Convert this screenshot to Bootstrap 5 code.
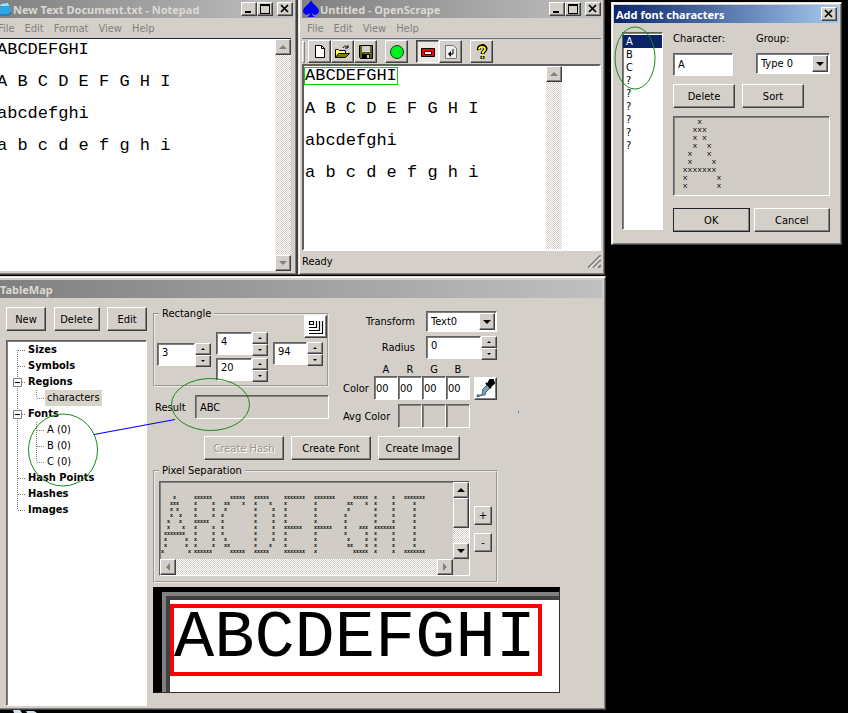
<!DOCTYPE html>
<html lang="en">
<head>
<meta charset="utf-8">
<meta name="viewport" content="width=device-width, initial-scale=1">
<title>OpenScrape</title>
<link href="https://cdn.jsdelivr.net/npm/bootstrap@5.3.0/dist/css/bootstrap.min.css" rel="stylesheet">
<style>
:root{--face:#d5cfc9;--dk:#808080;--ddk:#404040}
body{background:#000;color:#000;font-family:"DejaVu Sans Condensed","DejaVu Sans",sans-serif;font-size:11px;line-height:13px}
.desktop{min-height:100vh}
.win{position:absolute;background:var(--face);border:1px solid;border-color:#e6e2dc #404040 #404040 #e6e2dc;box-shadow:inset 1px 1px #fff,inset -1px -1px #808080;padding:3px}
.win-note{left:-7px;top:-4px;width:305px;height:279px;border-right-width:2px}
.win-note .title{padding-left:3px}
.win-note .doc{margin-right:2px}
.win-scrape{left:298px;top:-4px;width:307px;height:279px}
.win-dialog{left:611px;top:2px;width:231px;height:243px;padding:2px}
.win-map{left:-4px;top:276px;width:610px;height:434px}
.title{height:18px;color:#dcd8d2;font-weight:700;background:linear-gradient(90deg,#808080,#c0c0c0)}
.title.on{color:#fff;background:linear-gradient(90deg,#0a246a,#a6caf0);padding:0 2px}
.title h2{font-size:11px;line-height:13px;margin:0;font-weight:700;font-family:"Noto Sans",sans-serif;white-space:nowrap}
button,.raised{background:var(--face);color:#000;border:1px solid;border-color:#fff #404040 #404040 #fff;box-shadow:inset -1px -1px #808080;padding:0;border-radius:0;display:flex;align-items:center;justify-content:center;line-height:13px}
button:disabled{color:#9a958f;text-shadow:1px 1px #fff}
.cap{width:16px;height:14px}
.push{height:24px}
.sunk{background:#fff;border:1px solid;border-color:#606060 #fff #fff #606060;box-shadow:inset 1px 1px #808080;border-radius:0;color:#000}
.flat{background:#d2ccc6}
.menu{height:20px;color:#808080}
.menu a{color:#808080;text-decoration:none;padding:0 5px}
.dither{background:repeating-conic-gradient(#fff 0 25%,#d5cfc9 0 50%) 0 0/2px 2px}
.sb{width:16px;height:16px;flex:none}
.mono{font-family:"Liberation Mono",monospace;font-size:17px;line-height:16px;white-space:pre;overflow:visible;resize:none;color:#000;margin:0}
.note-area{border:0;outline:0;overflow:hidden;padding:3px 0 0 0;background:#fff}
.tools{height:26px}
.tool{width:23px;height:23px}
.pressed{background:#eae7e3;border-color:#404040 #fff #fff #404040;box-shadow:inset 1px 1px #808080}
.grip{width:3px;height:22px;border:1px solid;border-color:#fff #808080 #808080 #fff;margin-right:3px}
.canvas-area{height:187px;background:#fff;border:2px solid;border-color:#606060 #fff #fff #606060}
.shot{width:242px}
.pick{border:1px solid #00d800;height:18px;width:94px;margin:1px 0 0 0}
.lines{margin:16px 0 0 1px}
.status{height:21px}
.list{width:41px;height:198px;padding:2px 0 0}
.list li{line-height:13px;padding-left:3px}
.list .sel{background:#0a246a;color:#fff}
input.sunk{font-size:11px;line-height:13px;padding:0 4px;min-width:0;outline:0}
.combo{position:relative;height:21px}
.combo select{appearance:none;width:100%;height:100%;padding:0 4px;font-size:11px;outline:0}
.combo .raised{position:absolute;right:2px;top:2px;bottom:2px;width:16px;pointer-events:none}
.dlg{padding:9px 9px 0 8px;gap:10px}
.dlg-form{display:grid;grid-template-columns:62px 62px 1fr;column-gap:7px}
.glyph{font-family:"Liberation Mono",monospace;font-size:8px;line-height:8px;margin:0;overflow:hidden}
.glyph-one{height:80px;padding:1px 0 0 4px}
.glyph-all{font-size:5px;line-height:6px;font-weight:700;padding:13px 0 0 1px}
fieldset{border:2px groove #eeeae5;padding:0;margin:0;min-width:0}
legend{float:none;width:auto;font-size:11px;line-height:13px;margin:0 0 0 4px;padding:0 3px}
.map-body{padding:9px 0 0 6px;gap:6px}
.map-left{width:141px}
.map-right{width:407px}
.tree{height:366px;margin-top:9px;padding:1px 0 0 6px}
.tree ul{list-style:none;margin:0;padding:0}
.tree li{line-height:16px}
.tree .node{height:16px;display:flex;align-items:center;font-weight:700}
.tree .node svg{flex:none}
.tree .leaf{font-weight:400}
.hot{background:#d8d3c9;padding:0 2px;margin-left:-2px}
.rect{height:80px;width:176px}
.rect-grid{display:grid;grid-template-columns:54px 52px 54px;column-gap:5px;padding-left:2px;margin-top:-5px}
.drop-1{padding-top:28px}
.drop-2{padding-top:17px;gap:3px}
.spin{height:23px}
.spin input{flex:1;width:0;padding-bottom:4px!important}
.spin button{width:16px;height:12px}
.opts{display:grid;grid-template-columns:1fr 71px;column-gap:11px;align-items:center}
.argb{display:grid;grid-template-columns:minmax(0,1fr) 24px 24px 24px 24px 27px;align-items:center}
.argb label{padding-left:14px;white-space:nowrap;text-align:left}
.argb .wide{grid-column:span 2}
.argb input{width:24px;height:24px;padding:0 1px}
.makers{padding-left:51px;gap:7px}
.sep{height:119px;width:345px}
.sepbox{width:311px;height:95px}
.zoomed{height:106px;border:1px solid #303030;border-top:5px solid #000;border-left:9px solid #000;background:#fff}
.zoomed .edge1{border-top:4px solid #808080;border-left:4px solid #808080;height:100%}
.zoomed .edge2{border-top:4px solid #404040;border-left:4px solid #404040;height:100%;padding-top:4px}
.zoomed .red{border:4px solid #f00;width:372px;height:72px;font-family:"Liberation Mono",monospace;font-size:67px;line-height:60px;white-space:nowrap}
.marks{position:absolute;left:0;top:0;pointer-events:none}
</style>
<script src="https://cdn.jsdelivr.net/npm/bootstrap@5.3.0/dist/js/bootstrap.bundle.min.js"></script>
</head>
<body>
<svg width="0" height="0" class="position-absolute" aria-hidden="true"><defs>
<symbol id="min" viewBox="0 0 12 10"><path d="M2 7h6v2H2z"/></symbol>
<symbol id="max" viewBox="0 0 12 10"><path d="M1 0h10v10H1zM2 2v7h8V2z" fill-rule="evenodd"/></symbol>
<symbol id="cls" viewBox="0 0 12 10"><path d="M2 1l7 7M9 1L2 8" stroke="#000" stroke-width="1.7" fill="none"/></symbol>
<symbol id="up" viewBox="0 0 8 4"><path d="M4 0L8 4H0z"/></symbol>
<symbol id="dn" viewBox="0 0 8 4"><path d="M0 0h8L4 4z"/></symbol>
<symbol id="lf" viewBox="0 0 4 8"><path d="M4 0v8L0 4z"/></symbol>
<symbol id="rt" viewBox="0 0 4 8"><path d="M0 0l4 4-4 4z"/></symbol>
<symbol id="br" viewBox="0 0 22 16"><path d="M4.500 0V16M5 8.500H13" stroke="#808080" stroke-dasharray="1 1" fill="none"/></symbol>
<symbol id="br0" viewBox="0 0 22 16"><path d="M4.500 8V16M5 8.500H13" stroke="#808080" stroke-dasharray="1 1" fill="none"/></symbol>
<symbol id="br9" viewBox="0 0 22 16"><path d="M4.500 0V8M5 8.500H13" stroke="#808080" stroke-dasharray="1 1" fill="none"/></symbol>
<symbol id="bx" viewBox="0 0 22 16"><path d="M4.500 0V16M5 8.500H13" stroke="#808080" stroke-dasharray="1 1" fill="none"/><path d="M.5 4.500h8v8h-8z" fill="#fff" stroke="#808080"/><path d="M2 8.500h5" stroke="#000"/></symbol>
<symbol id="ch" viewBox="0 0 41 16"><path d="M4.500 0V16M23.500 0V16M24 8.500H32" stroke="#808080" stroke-dasharray="1 1" fill="none"/></symbol>
<symbol id="ch1" viewBox="0 0 41 16"><path d="M4.500 0V16M23.500 0V8M24 8.500H32" stroke="#808080" stroke-dasharray="1 1" fill="none"/></symbol>
</defs></svg>
<main class="desktop position-relative overflow-hidden">

<section class="win win-note d-flex flex-column">
  <header class="title d-flex align-items-center">
    <svg width="13" height="16" viewBox="0 0 13 16"><path d="M1 3l7-1 3 9-2 3H0z" fill="#29a8e8"/><path d="M1 3l7-1 1 3H0z" fill="#a8e0f8"/><path d="M0 14h9l2-3" stroke="#1060a0" fill="none"/></svg>
    <h2 class="flex-grow-1">New Text Document.txt - Notepad</h2>
    <button class="cap" aria-label="Minimize"><svg width="12" height="10"><use href="#min"/></svg></button><button class="cap" aria-label="Maximize"><svg width="12" height="10"><use href="#max"/></svg></button><button class="cap ms-1" aria-label="Close"><svg width="12" height="10"><use href="#cls"/></svg></button>
  </header>
  <nav class="menu d-flex align-items-center" style="margin-left:-4px"><a href="#">File</a><a href="#">Edit</a><a href="#">Format</a><a href="#">View</a><a href="#">Help</a></nav>
  <div class="doc d-flex flex-grow-1 border-top border-dark">
    <textarea class="mono note-area flex-grow-1" aria-label="Document" spellcheck="false">ABCDEFGHI

A B C D E F G H I

abcdefghi

a b c d e f g h i</textarea>
    <div class="dither d-flex flex-column justify-content-between">
      <button class="sb" aria-label="Scroll up"><svg width="8" height="4" fill="#808080"><use href="#up"/></svg></button>
      <button class="sb" aria-label="Scroll down"><svg width="8" height="4" fill="#808080"><use href="#dn"/></svg></button>
    </div>
  </div>
</section>

<section class="win win-scrape">
  <header class="title d-flex align-items-center">
    <svg width="18" height="18" viewBox="0 0 18 18"><path d="M9 0C10 4 17 7 17 11c0 4-5 5-7 2 0 2 1 3 3 4H5c2-1 3-2 3-4-2 3-7 2-7-2C1 7 8 4 9 0z" fill="#00f"/></svg>
    <h2 class="flex-grow-1">Untitled - OpenScrape</h2>
    <button class="cap" aria-label="Minimize"><svg width="12" height="10"><use href="#min"/></svg></button><button class="cap" aria-label="Maximize"><svg width="12" height="10"><use href="#max"/></svg></button><button class="cap ms-1" aria-label="Close"><svg width="12" height="10"><use href="#cls"/></svg></button>
  </header>
  <nav class="menu d-flex align-items-center"><a href="#">File</a><a href="#">Edit</a><a href="#">View</a><a href="#">Help</a></nav>
  <div class="tools d-flex align-items-center border-top border-secondary">
    <span class="grip"></span>
    <button class="tool" aria-label="New"><svg width="16" height="16"><path d="M3.500 1.500h6l3 3v9h-9z" fill="#fff" stroke="#000"/><path d="M9.500 1.500v3h3" fill="none" stroke="#000"/></svg></button>
    <button class="tool" aria-label="Open"><svg width="17" height="16"><path d="M1.500 13.500v-8h3l1 1h6v3" fill="#ffff60" stroke="#000"/><path d="M1.500 13.500l3-4h11l-4 4z" fill="#808000" stroke="#000"/><path d="M9 4c1-3 4-2 5 0m0-3v3h-3" fill="none" stroke="#000"/></svg></button>
    <button class="tool" aria-label="Save"><svg width="16" height="16"><path d="M1.500 1.500h13v13h-12l-1-1z" fill="#606018" stroke="#000"/><path d="M4 2h8v6H4z" fill="#d5cfc9"/><path d="M4 10h8v4H4z"/><path d="M9 11h2v3H9z" fill="#d5cfc9"/></svg></button>
    <button class="tool ms-2" aria-label="Start"><svg width="16" height="16"><circle cx="8" cy="8" r="6.500" fill="#00f020" stroke="#104010"/></svg></button>
    <button class="tool pressed ms-2" aria-label="Select region"><svg width="16" height="16"><path d="M1.500 4.500h13v8h-13z" fill="red" stroke="#000"/><path d="M4.500 7.500h7v3h-7z" fill="#eee" stroke="#400"/></svg></button>
    <button class="tool" aria-label="Refresh"><svg width="16" height="16"><path d="M2.500 1.500h8l3 3v10h-11z" fill="#eee" stroke="#777"/><path d="M10 5v5H7" fill="none" stroke="#000"/><path d="M8 7v6l-3-3z"/></svg></button>
    <button class="tool ms-2" aria-label="Help"><svg width="14" height="16"><path d="M4 6C3 1 11 1 10.500 5 10 7 7.500 7.500 7.500 10M7.500 12v3" fill="none" stroke="#000" stroke-width="4"/><path d="M4 5.500C4 2 10 2 10 5 10 7 7.500 7.500 7.500 9.500M7.500 12.500v2" fill="none" stroke="#ff0" stroke-width="1.800"/></svg></button>
  </div>
  <div class="canvas-area d-flex">
    <div class="shot"><div class="mono pick">ABCDEFGHI</div><pre class="mono lines">A B C D E F G H I

abcdefghi

a b c d e f g h i</pre></div>
    <div class="dither"><button class="sb" aria-label="Scroll up"><svg width="8" height="4" fill="#808080"><use href="#up"/></svg></button></div>
  </div>
  <footer class="status d-flex align-items-center justify-content-between"><span>Ready</span><svg width="13" height="13"><path d="M0 13L13 0M5 13l8-8M10 13l3-3" stroke="#808080" stroke-width="2"/><path d="M1.500 13L13 1.500M6.500 13L13 6.500" stroke="#fff"/></svg></footer>
</section>

<section class="win win-dialog">
  <header class="title on d-flex align-items-center"><h2 class="flex-grow-1">Add font characters</h2><button class="cap" aria-label="Close"><svg width="12" height="10"><use href="#cls"/></svg></button></header>
  <div class="dlg d-flex">
    <ul class="list sunk list-unstyled mb-0"><li class="sel">A</li><li>B</li><li>C</li><li>?</li><li>?</li><li>?</li><li>?</li><li>?</li><li>?</li></ul>
    <div class="flex-grow-1">
      <div class="d-flex justify-content-between mb-2"><div><label for="chr" class="d-block mb-1">Character:</label><input id="chr" class="sunk mt-1" style="width:60px;height:23px" value="A"></div>
      <div style="width:74px"><label for="grp" class="d-block mb-1">Group:</label><div class="combo mt-2"><select id="grp" class="sunk"><option>Type 0</option></select><span class="raised"><svg width="8" height="4"><use href="#dn"/></svg></span></div></div></div>
      <div class="dlg-form mb-2"><button class="push">Delete</button><button class="push">Sort</button></div>
      <pre class="sunk flat glyph glyph-one mb-0">    x
   xxx
   x x
   x  x
  x   x
  x    x
 xxxxxxx
 x      x
 x      x</pre>
      <div class="d-flex mt-2 pt-1 gap-1"><button class="push flex-fill w-50 border-dark">OK</button><button class="push flex-fill w-50">Cancel</button></div>
    </div>
  </div>
</section>

<section class="win win-map">
  <header class="title d-flex align-items-center"><h2>TableMap</h2></header>
  <div class="map-body d-flex">
    <div class="map-left">
      <div class="d-flex justify-content-between"><button class="push" style="width:40px">New</button><button class="push" style="width:46px">Delete</button><button class="push" style="width:40px">Edit</button></div>
      <div class="tree sunk"><ul>
        <li class="node"><svg width="15" height="16" viewBox="0 0 15 16"><use href="#br0" width="22" height="16"/></svg><span>Sizes</span></li>
        <li class="node"><svg width="15" height="16" viewBox="0 0 15 16"><use href="#br" width="22" height="16"/></svg><span>Symbols</span></li>
        <li class="node"><svg width="15" height="16" viewBox="0 0 15 16"><use href="#bx" width="22" height="16"/></svg><span>Regions</span></li>
        <li class="node leaf"><svg width="34" height="16" viewBox="0 0 34 16"><use href="#ch1" width="41" height="16"/></svg><span class="hot">characters</span></li>
        <li class="node"><svg width="15" height="16" viewBox="0 0 15 16"><use href="#bx" width="22" height="16"/></svg><span>Fonts</span></li>
        <li class="node leaf"><svg width="34" height="16" viewBox="0 0 34 16"><use href="#ch" width="41" height="16"/></svg><span>A (0)</span></li>
        <li class="node leaf"><svg width="34" height="16" viewBox="0 0 34 16"><use href="#ch" width="41" height="16"/></svg><span>B (0)</span></li>
        <li class="node leaf"><svg width="34" height="16" viewBox="0 0 34 16"><use href="#ch1" width="41" height="16"/></svg><span>C (0)</span></li>
        <li class="node"><svg width="15" height="16" viewBox="0 0 15 16"><use href="#br" width="22" height="16"/></svg><span>Hash Points</span></li>
        <li class="node"><svg width="15" height="16" viewBox="0 0 15 16"><use href="#br" width="22" height="16"/></svg><span>Hashes</span></li>
        <li class="node"><svg width="15" height="16" viewBox="0 0 15 16"><use href="#br9" width="22" height="16"/></svg><span>Images</span></li>
      </ul></div>
    </div>
    <div class="map-right">
      <div class="d-flex">
        <div style="width:176px">
          <fieldset class="rect"><legend>Rectangle</legend>
            <div class="rect-grid">
              <div class="drop-1"><div class="spin d-flex"><input class="sunk" aria-label="Left" value="3"><div><button aria-label="Up"><svg width="4" height="2"><use href="#up"/></svg></button><button aria-label="Down"><svg width="4" height="2"><use href="#dn"/></svg></button></div></div></div>
              <div class="drop-2 d-flex flex-column"><div class="spin d-flex"><input class="sunk" aria-label="Top" value="4"><div><button aria-label="Up"><svg width="4" height="2"><use href="#up"/></svg></button><button aria-label="Down"><svg width="4" height="2"><use href="#dn"/></svg></button></div></div>
              <div class="spin d-flex"><input class="sunk" aria-label="Bottom" value="20"><div><button aria-label="Up"><svg width="4" height="2"><use href="#up"/></svg></button><button aria-label="Down"><svg width="4" height="2"><use href="#dn"/></svg></button></div></div></div>
              <div><button class="ms-auto tool bg-white mb-1" aria-label="Drag region"><svg width="16" height="16" fill="none" stroke="#000"><path d="M1.500 2.500h4v3h-4zM8.500 2v6.500H1M11.500 2v9.500H1M14.500 2v12.500H1" stroke-width="1.200"/></svg></button><div class="spin d-flex me-1"><input class="sunk" aria-label="Right" value="94"><div><button aria-label="Up"><svg width="4" height="2"><use href="#up"/></svg></button><button aria-label="Down"><svg width="4" height="2"><use href="#dn"/></svg></button></div></div></div>
            </div>
          </fieldset>
          <div class="d-flex align-items-center mt-2"><label for="res" style="width:42px;padding-left:2px">Result</label><input id="res" class="sunk flat flex-grow-1" style="height:24px" value="ABC" readonly></div>
        </div>
        <div style="width:168px" class="pt-1">
          <div class="opts text-end"><label for="tr">Transform</label><div class="combo text-start"><select id="tr" class="sunk"><option>Text0</option></select><span class="raised"><svg width="8" height="4"><use href="#dn"/></svg></span></div></div>
          <div class="opts text-end mt-1"><label for="rad">Radius</label><div class="spin d-flex"><input id="rad" class="sunk" value="0"><div><button aria-label="Up"><svg width="4" height="2"><use href="#up"/></svg></button><button aria-label="Down"><svg width="4" height="2"><use href="#dn"/></svg></button></div></div></div>
          <div class="argb text-center mt-1"><span></span><span>A</span><span>R</span><span>G</span><span>B</span><span></span>
            <label for="ca">Color</label><input id="ca" class="sunk" value="00"><input class="sunk" aria-label="R" value="00"><input class="sunk" aria-label="G" value="00"><input class="sunk" aria-label="B" value="00"><button class="tool bg-white ms-1" aria-label="Pick color"><svg width="19" height="20"><path d="M1 19l5-2 1-6 5-5 3 3-5 5-1 3H1z" fill="#78a8b8" stroke="#406070"/><path d="M10 5l5 5M12 6l2-4h3l1 3-4 4z" stroke="#000" stroke-width="2"/></svg></button></div>
          <div class="argb mt-1"><label for="avr" class="wide">Avg Color</label><input id="avr" class="sunk flat" readonly><input class="sunk flat" aria-label="Average G" readonly><input class="sunk flat" aria-label="Average B" readonly><span></span></div>
        </div>
      </div>
      <div class="makers d-flex mt-2"><button class="push" style="width:80px" disabled>Create Hash</button><button class="push" style="width:80px">Create Font</button><button class="push" style="width:82px">Create Image</button></div>
      <fieldset class="sep mt-1"><legend>Pixel Separation</legend>
        <div class="d-flex align-items-center ps-1 pt-1 gap-1">
          <div class="sepbox sunk flat d-flex">
            <div class="d-flex flex-column flex-grow-1"><pre class="glyph glyph-all flex-grow-1">    x      xxxxxx      xxxxx   xxxxx     xxxxxxx   xxxxxxx      xxxxx  x     x   xxxxxxx
   xxx     x     x   xx    x   x    x    x         x          xx    x  x     x      x
   x x     x     x   x         x     x   x         x          x        x     x      x
   x  x    x     x  x          x     x   x         x         x         x     x      x
  x   x    xxxxx    x          x     x   x         x         x         x     x      x
  x    x   x     x  x          x     x   xxxxxx    xxxxxx    x    xxx  xxxxxxx      x
 xxxxxxx   x     x  x          x     x   x         x         x      x  x     x      x
 x      x  x     x   x         x     x   x         x          x     x  x     x      x
 x      x  x     x   xx        x    x    x         x          xx    x  x     x      x
x        x xxxxxx      xxxxx   xxxxx     xxxxxxx   x            xxxxx  x     x   xxxxxxx</pre>
              <div class="dither d-flex justify-content-between"><button class="sb" aria-label="Scroll left"><svg width="4" height="8" fill="#808080"><use href="#lf"/></svg></button><button class="sb" aria-label="Scroll right"><svg width="4" height="8" fill="#808080"><use href="#rt"/></svg></button></div></div>
            <div class="dither d-flex flex-column mb-3"><button class="sb" aria-label="Scroll up"><svg width="8" height="4"><use href="#up"/></svg></button><span class="raised" style="height:30px"></span><button class="sb mt-auto" aria-label="Scroll down"><svg width="8" height="4"><use href="#dn"/></svg></button></div>
          </div>
          <div class="d-flex flex-column gap-1"><button style="width:18px;height:19px">+</button><button class="mt-1" style="width:18px;height:19px">-</button></div>
        </div>
      </fieldset>
      <div class="zoomed mt-1"><div class="edge1"><div class="edge2"><div class="red">ABCDEFGHI</div></div></div></div>
    </div>
  </div>
</section>

<svg class="marks" width="848" height="713" fill="none" aria-hidden="true"><g stroke="#168a16"><ellipse cx="635" cy="58" rx="20" ry="31"/><ellipse cx="210.500" cy="404.500" rx="39" ry="26"/><ellipse cx="63" cy="450" rx="34.500" ry="36"/></g><path d="M94 434.500L175 419.500" stroke="#00f" stroke-width="1.200"/><path d="M518 412h1" stroke="#00f"/><path d="M13 710h7l2 3h-8zM26 711h8l3 2H27z" fill="#d8e0f0"/></svg>
</main>
</body>
</html>
